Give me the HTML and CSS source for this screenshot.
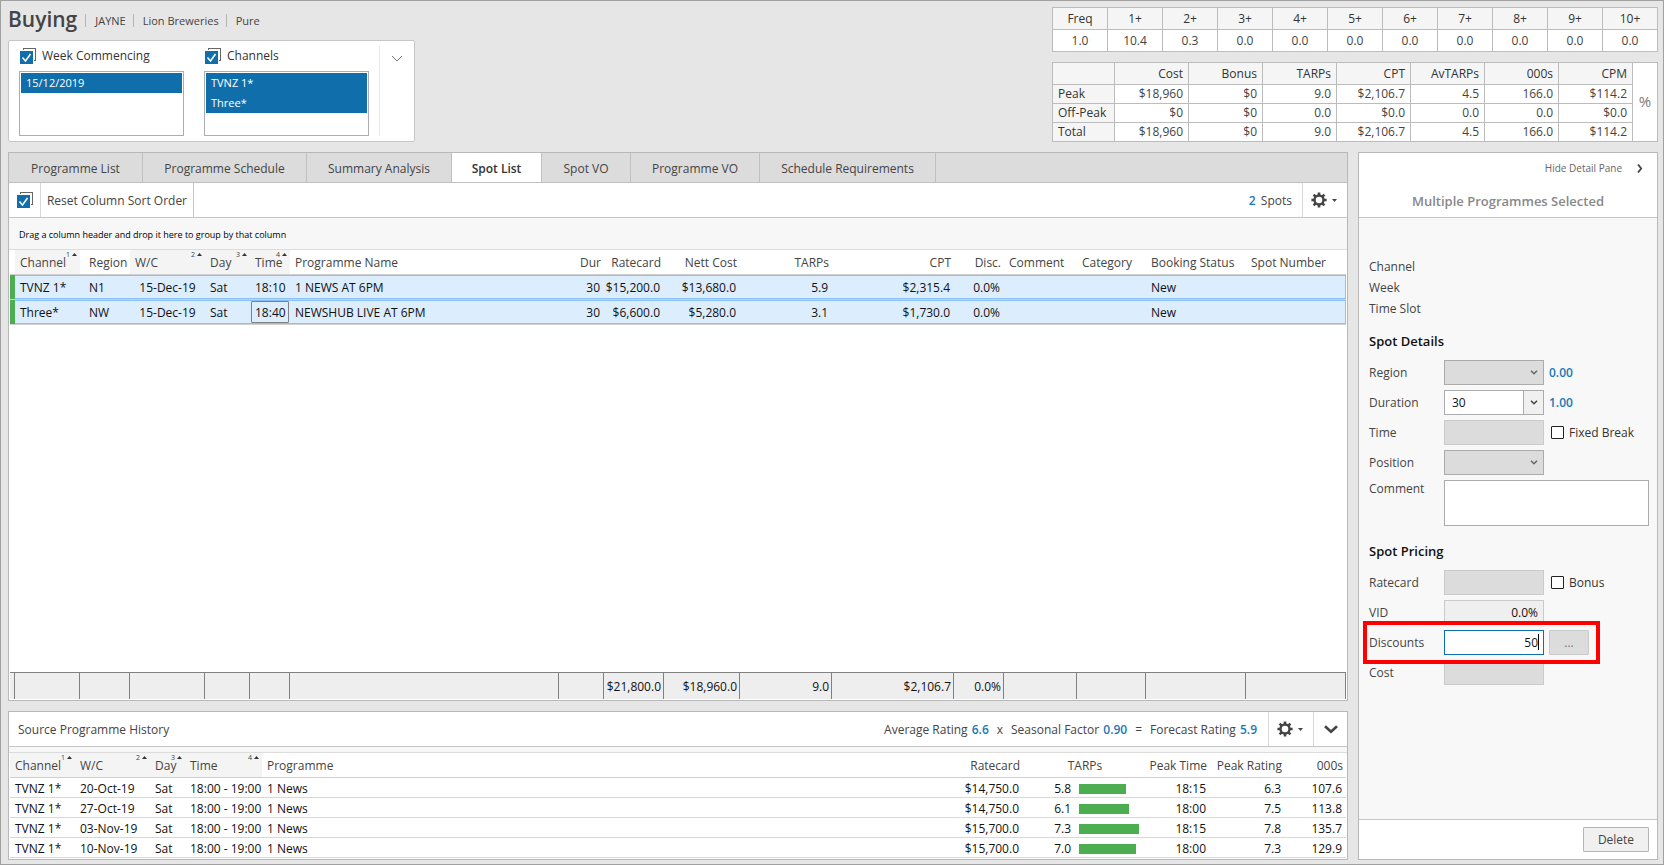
FILE: index.html
```html
<!DOCTYPE html>
<html lang="en">
<head>
    <meta charset="UTF-8">
    <meta name="viewport" content="width=device-width, initial-scale=1.0">
    <title>Buying</title>
    <link rel="stylesheet" href="styles.css">
</head>
<body>
    <svg class="defs" aria-hidden="true">
        <symbol id="check-all" viewBox="0 0 16 16">
            <rect x="3.5" y="0.5" width="12" height="12" fill="#fff" stroke="#666"/>
            <path d="M0 2h14v14H0z" fill="#fff"/>
            <rect x="0" y="3" width="13" height="13" fill="#106fab"/>
            <path d="M2.5 9.5l3 3.5 5-7" fill="none" stroke="#fff" stroke-width="1.5"/>
        </symbol>
        <symbol id="gear" viewBox="0 0 16 16">
            <circle cx="8" cy="8" r="4.5" fill="none" stroke="#444" stroke-width="2.4"/>
            <path d="M8 0.4v3M8 12.6v3M0.4 8h3M12.6 8h3M2.6 2.6l2.2 2.2M11.2 11.2l2.2 2.2M2.6 13.4l2.2-2.2M11.2 4.8l2.2-2.2" stroke="#444" stroke-width="2.6"/>
        </symbol>
        <symbol id="caret" viewBox="0 0 5 3">
            <path d="M0 0h5L2.5 3z" fill="#444"/>
        </symbol>
        <symbol id="sort-up" viewBox="0 0 5 3">
            <path d="M0 3h5L2.5 0z" fill="#333"/>
        </symbol>
        <symbol id="chevron" viewBox="0 0 8 5">
            <path d="M1 0.8l3 3 3-3" fill="none" stroke="currentColor" stroke-width="1.5"/>
        </symbol>
    </svg>

    <div class="page">
        <header class="top">
            <div class="top-left">
                <div class="title-row">
                    <h1>Buying</h1>
                    <span class="crumb">JAYNE</span>
                    <span class="crumb">Lion Breweries</span>
                    <span class="crumb">Pure</span>
                </div>
                <div class="filters">
                    <div class="filter">
                        <div class="filter-title">
                            <button class="icon-btn" aria-label="Select all weeks"><svg class="icon16"><use href="#check-all"/></svg></button>
                            <span>Week Commencing</span>
                        </div>
                        <ul class="list" role="listbox" aria-label="Week Commencing">
                            <li role="option" aria-selected="true">15/12/2019</li>
                        </ul>
                    </div>
                    <div class="filter">
                        <div class="filter-title">
                            <button class="icon-btn" aria-label="Select all channels"><svg class="icon16"><use href="#check-all"/></svg></button>
                            <span>Channels</span>
                        </div>
                        <ul class="list" role="listbox" aria-label="Channels">
                            <li role="option" aria-selected="true">TVNZ 1*</li>
                            <li role="option" aria-selected="true">Three*</li>
                        </ul>
                    </div>
                    <button class="expand" aria-label="Expand filters">
                        <svg width="12" height="7" viewBox="0 0 12 7"><path d="M1 1l5 5 5-5" fill="none" stroke="#777"/></svg>
                    </button>
                </div>
            </div>

            <div class="top-right">
                <table class="stats freq">
                    <thead>
                        <tr><th>Freq</th><th>1+</th><th>2+</th><th>3+</th><th>4+</th><th>5+</th><th>6+</th><th>7+</th><th>8+</th><th>9+</th><th>10+</th></tr>
                    </thead>
                    <tbody>
                        <tr><td>1.0</td><td>10.4</td><td>0.3</td><td>0.0</td><td>0.0</td><td>0.0</td><td>0.0</td><td>0.0</td><td>0.0</td><td>0.0</td><td>0.0</td></tr>
                    </tbody>
                </table>
                <table class="stats costs">
                    <colgroup><col class="c-label"><col span="7"><col class="c-pct"></colgroup>
                    <tbody>
                        <tr class="head"><th></th><th>Cost</th><th>Bonus</th><th>TARPs</th><th>CPT</th><th>AvTARPs</th><th>000s</th><th>CPM</th><td class="pct" rowspan="4"><button>%</button></td></tr>
                        <tr><th class="row-label">Peak</th><td>$18,960</td><td>$0</td><td>9.0</td><td>$2,106.7</td><td>4.5</td><td>166.0</td><td>$114.2</td></tr>
                        <tr><th class="row-label">Off-Peak</th><td>$0</td><td>$0</td><td>0.0</td><td>$0.0</td><td>0.0</td><td>0.0</td><td>$0.0</td></tr>
                        <tr><th class="row-label">Total</th><td>$18,960</td><td>$0</td><td>9.0</td><td>$2,106.7</td><td>4.5</td><td>166.0</td><td>$114.2</td></tr>
                    </tbody>
                </table>
            </div>
        </header>

        <div class="workspace">
            <main class="left">
                <section class="panel spots">
                    <nav class="tabs">
                        <button>Programme List</button>
                        <button>Programme Schedule</button>
                        <button>Summary Analysis</button>
                        <button class="active">Spot List</button>
                        <button>Spot VO</button>
                        <button>Programme VO</button>
                        <button>Schedule Requirements</button>
                    </nav>
                    <div class="toolbar">
                        <button class="tool check" aria-label="Select all spots"><svg class="icon16"><use href="#check-all"/></svg></button>
                        <button class="tool reset">Reset Column Sort Order</button>
                        <span class="count"><b>2</b> Spots</span>
                        <button class="tool settings" aria-label="Spot list settings"><svg class="icon16"><use href="#gear"/></svg><svg class="caret"><use href="#caret"/></svg></button>
                    </div>
                    <div class="group-hint">Drag a column header and drop it here to group by that column</div>
                    <div class="grid-wrap">
                        <table class="grid spot-grid">
                            <colgroup>
                                <col class="w5"><col class="w65"><col class="w50"><col class="w75"><col class="w45"><col class="w40"><col>
                                <col class="w45"><col class="w60"><col class="w76"><col class="w92"><col class="w122"><col class="w50"><col class="w73"><col class="w69"><col class="w100"><col class="w100">
                            </colgroup>
                            <thead>
                                <tr>
                                    <th></th>
                                    <th class="sorted">Channel<span class="sort">1<svg><use href="#sort-up"/></svg></span></th>
                                    <th class="region">Region</th>
                                    <th class="sorted">W/C<span class="sort">2<svg><use href="#sort-up"/></svg></span></th>
                                    <th class="sorted">Day<span class="sort">3<svg><use href="#sort-up"/></svg></span></th>
                                    <th class="sorted">Time<span class="sort">4<svg><use href="#sort-up"/></svg></span></th>
                                    <th>Programme Name</th>
                                    <th class="num">Dur</th>
                                    <th class="num">Ratecard</th>
                                    <th class="num">Nett Cost</th>
                                    <th class="num">TARPs</th>
                                    <th class="num">CPT</th>
                                    <th class="num">Disc.</th>
                                    <th>Comment</th>
                                    <th>Category</th>
                                    <th>Booking Status</th>
                                    <th>Spot Number</th>
                                </tr>
                            </thead>
                            <tbody>
                                <tr>
                                    <td class="flag"></td><td>TVNZ 1*</td><td class="region">N1</td><td class="date">15-Dec-19</td><td>Sat</td><td>18:10</td><td>1 NEWS AT 6PM</td>
                                    <td class="num">30</td><td class="num">$15,200.0</td><td class="num">$13,680.0</td><td class="num">5.9</td><td class="num">$2,315.4</td><td class="num">0.0%</td><td></td><td></td><td>New</td><td></td>
                                </tr>
                                <tr>
                                    <td class="flag"></td><td>Three*</td><td class="region">NW</td><td class="date">15-Dec-19</td><td>Sat</td><td class="focused">18:40</td><td>NEWSHUB LIVE AT 6PM</td>
                                    <td class="num">30</td><td class="num">$6,600.0</td><td class="num">$5,280.0</td><td class="num">3.1</td><td class="num">$1,730.0</td><td class="num">0.0%</td><td></td><td></td><td>New</td><td></td>
                                </tr>
                            </tbody>
                        </table>
                        <table class="grid totals">
                            <colgroup>
                                <col class="w5"><col class="w65"><col class="w50"><col class="w75"><col class="w45"><col class="w40"><col>
                                <col class="w45"><col class="w60"><col class="w76"><col class="w92"><col class="w122"><col class="w50"><col class="w73"><col class="w69"><col class="w100"><col class="w100">
                            </colgroup>
                            <tbody>
                                <tr>
                                    <td></td><td></td><td></td><td></td><td></td><td></td><td></td><td></td>
                                    <td>$21,800.0</td><td>$18,960.0</td><td>9.0</td><td>$2,106.7</td><td>0.0%</td>
                                    <td></td><td></td><td></td><td></td>
                                </tr>
                            </tbody>
                        </table>
                    </div>
                </section>

                <section class="panel history">
                    <div class="history-head">
                        <h2>Source Programme History</h2>
                        <div class="formula">
                            <span>Average Rating <b>6.6</b></span>
                            <span>x</span>
                            <span>Seasonal Factor <b>0.90</b></span>
                            <span>=</span>
                            <span>Forecast Rating <b>5.9</b></span>
                        </div>
                        <button class="tool settings" aria-label="History settings"><svg class="icon16"><use href="#gear"/></svg><svg class="caret"><use href="#caret"/></svg></button>
                        <button class="tool collapse" aria-label="Collapse history">
                            <svg width="14" height="9" viewBox="0 0 14 9"><path d="M1 1.2l6 5.6 6-5.6" fill="none" stroke="#444" stroke-width="2.6"/></svg>
                        </button>
                    </div>
                    <div class="strip"></div>
                    <table class="grid history-grid">
                        <colgroup>
                            <col class="w65"><col class="w75"><col class="w35"><col class="w77"><col><col class="w100"><col class="w124"><col class="w63"><col class="w75"><col class="w61">
                        </colgroup>
                        <thead>
                            <tr>
                                <th class="sorted">Channel<span class="sort">1<svg><use href="#sort-up"/></svg></span></th>
                                <th class="sorted">W/C<span class="sort">2<svg><use href="#sort-up"/></svg></span></th>
                                <th class="sorted">Day<span class="sort">3<svg><use href="#sort-up"/></svg></span></th>
                                <th class="sorted">Time<span class="sort">4<svg><use href="#sort-up"/></svg></span></th>
                                <th>Programme</th>
                                <th class="num">Ratecard</th>
                                <th class="mid">TARPs</th>
                                <th class="num">Peak Time</th>
                                <th class="num">Peak Rating</th>
                                <th class="num">000s</th>
                            </tr>
                        </thead>
                        <tbody>
                            <tr><td>TVNZ 1*</td><td>20-Oct-19</td><td>Sat</td><td>18:00 - 19:00</td><td>1 News</td><td class="num">$14,750.0</td><td class="tarp"><div><span>5.8</span><i style="width: 47px"></i></div></td><td class="num">18:15</td><td class="num">6.3</td><td class="num">107.6</td></tr>
                            <tr><td>TVNZ 1*</td><td>27-Oct-19</td><td>Sat</td><td>18:00 - 19:00</td><td>1 News</td><td class="num">$14,750.0</td><td class="tarp"><div><span>6.1</span><i style="width: 50px"></i></div></td><td class="num">18:00</td><td class="num">7.5</td><td class="num">113.8</td></tr>
                            <tr><td>TVNZ 1*</td><td>03-Nov-19</td><td>Sat</td><td>18:00 - 19:00</td><td>1 News</td><td class="num">$15,700.0</td><td class="tarp"><div><span>7.3</span><i style="width: 60px"></i></div></td><td class="num">18:15</td><td class="num">7.8</td><td class="num">135.7</td></tr>
                            <tr><td>TVNZ 1*</td><td>10-Nov-19</td><td>Sat</td><td>18:00 - 19:00</td><td>1 News</td><td class="num">$15,700.0</td><td class="tarp"><div><span>7.0</span><i style="width: 57px"></i></div></td><td class="num">18:00</td><td class="num">7.3</td><td class="num">129.9</td></tr>
                        </tbody>
                    </table>
                </section>
            </main>

            <aside class="panel detail">
                <div class="detail-head">
                    <button class="hide-pane">Hide Detail Pane
                        <svg width="6" height="9" viewBox="0 0 6 9"><path d="M1 0.5L4.2 4.5 1 8.5" fill="none" stroke="#444" stroke-width="1.8"/></svg>
                    </button>
                    <h2>Multiple Programmes Selected</h2>
                </div>
                <form class="detail-body">
                    <div class="info">
                        <div>Channel</div>
                        <div>Week</div>
                        <div>Time Slot</div>
                    </div>

                    <h3>Spot Details</h3>
                    <div class="fields">
                        <label for="region">Region</label>
                        <div class="select disabled"><select id="region" disabled></select><span class="arrow"><svg><use href="#chevron"/></svg></span></div>
                        <b>0.00</b>

                        <label for="duration">Duration</label>
                        <div class="select"><select id="duration"><option>30</option></select><span class="arrow"><svg><use href="#chevron"/></svg></span></div>
                        <b>1.00</b>

                        <label for="time">Time</label>
                        <input class="box" type="text" id="time" disabled>
                        <label class="tick"><input type="checkbox">Fixed Break</label>

                        <label for="position">Position</label>
                        <div class="select disabled"><select id="position" disabled></select><span class="arrow"><svg><use href="#chevron"/></svg></span></div>
                        <span></span>

                        <label class="label-top" for="comment">Comment</label>
                        <textarea id="comment"></textarea>
                    </div>

                    <h3>Spot Pricing</h3>
                    <div class="fields">
                        <label for="ratecard">Ratecard</label>
                        <input class="box" type="text" id="ratecard" disabled>
                        <label class="tick"><input type="checkbox">Bonus</label>

                        <label for="vid">VID</label>
                        <input class="box readonly" type="text" id="vid" value="0.0%" readonly>
                        <span></span>

                        <div class="fields discount-row">
                            <label for="discounts">Discounts</label>
                            <div class="caret-box"><input class="box active" type="text" id="discounts" value="50"></div>
                            <button type="button" class="more" aria-label="Edit discounts">...</button>
                        </div>

                        <label for="cost">Cost</label>
                        <input class="box" type="text" id="cost" disabled>
                    </div>
                </form>
                <div class="detail-foot">
                    <button class="delete">Delete</button>
                </div>
            </aside>
        </div>
    </div>
</body>
</html>
```
FILE: styles.css
```css
*, *::before, *::after {
    box-sizing: border-box;
}
body {
    margin: 0;
    font-family: "Open Sans", "Noto Sans", sans-serif;
    font-size: 12px;
    line-height: 18px;
    color: #444;
    background-color: #e6e6e6;
}
button, input, select, textarea {
    font: inherit;
    color: inherit;
    margin: 0;
}
button {
    background: none;
    border: 0;
    padding: 0;
    cursor: pointer;
}
h1, h2, h3, ul {
    margin: 0;
    padding: 0;
}
svg {
    display: block;
}
b {
    font-weight: 600;
    color: #1a78b5;
}
.defs {
    position: absolute;
    width: 0;
    height: 0;
}
.icon16 {
    width: 16px;
    height: 16px;
}
.page {
    min-height: 100vh;
    display: flex;
    flex-direction: column;
    gap: 10px;
    padding: 6px 5px 4px 7px;
    border: 1px solid #a0a0a0;
}

/* top area */
.top {
    display: flex;
    justify-content: space-between;
    align-items: flex-start;
}
.title-row {
    display: flex;
    align-items: center;
    height: 33px;
    padding-bottom: 10px;
}
h1 {
    font-size: 21px;
    line-height: 24px;
    font-weight: 600;
    margin-right: 8px;
}
.crumb {
    border-left: 1px solid #b5b5b5;
    margin-top: 4px;
    padding: 0 7px 0 9px;
    font-size: 11px;
    line-height: 13px;
}
.filters {
    display: flex;
    gap: 20px;
    height: 102px;
    padding: 5px 0 5px 10px;
    background-color: #fff;
    border: 1px solid #c6c6c6;
    border-radius: 2px;
}
.filter {
    width: 165px;
}
.filter-title {
    display: flex;
    align-items: center;
    gap: 6px;
    height: 20px;
    margin-bottom: 5px;
    padding-left: 1px;
    color: #333;
    font-weight: 500;
}
.list {
    list-style: none;
    height: 65px;
    padding: 1px;
    border: 1px solid #abadb3;
}
.list li {
    height: 20px;
    padding-left: 5px;
    font-size: 11px;
    line-height: 20px;
    color: #fff;
    background-color: #106fab;
}
.expand {
    display: flex;
    justify-content: center;
    align-items: flex-start;
    width: 35px;
    margin-left: -10px;
    padding-top: 9px;
    border-left: 1px solid #e8e8e8;
}

/* statistics tables */
.stats {
    width: 606px;
    table-layout: fixed;
    border-spacing: 0;
    border: solid #bcbcbc;
    border-width: 1px 0 0 1px;
    background-color: #fff;
}
.stats th, .stats td {
    padding: 0;
    border: solid #bcbcbc;
    border-width: 0 1px 1px 0;
}
.stats th {
    background-color: #f5f5f5;
    font-weight: 500;
    color: #333;
}
.freq {
    margin-bottom: 10px;
    text-align: center;
}
.freq tr {
    height: 22px;
}
.costs th, .costs td {
    height: 19px;
    padding-right: 5px;
    text-align: right;
}
.costs .head th {
    height: 22px;
}
.costs .row-label {
    padding: 0 0 0 5px;
    text-align: left;
}
.c-label {
    width: 62px;
}
.c-pct {
    width: 25px;
}
.costs .pct {
    padding: 0;
    text-align: center;
    color: #777;
}
.pct button {
    font-size: 15px;
}

/* workspace */
.workspace {
    flex: 1;
    display: grid;
    grid-template-columns: minmax(0, 1fr) 300px;
    gap: 10px;
}
.left {
    display: flex;
    flex-direction: column;
    gap: 10px;
}
.panel {
    background-color: #fff;
    border: 1px solid #b8b8b8;
}
.spots {
    flex: 1;
    display: flex;
    flex-direction: column;
}
.tabs {
    display: grid;
    grid-template-columns: 134px 164px 145px 90px 89px 129px 176px;
    height: 30px;
    background-color: #dcdcdc;
    border-bottom: 1px solid #c0c0c0;
}
.tabs button {
    padding-top: 2px;
    border-right: 1px solid #c0c0c0;
    font-size: 12px;
}
.tabs .active {
    background-color: #fff;
    font-weight: 600;
    color: #333;
}
.toolbar, .history-head {
    display: flex;
    align-items: center;
    height: 35px;
    border-bottom: 1px solid #c6c6c6;
}
.tool {
    display: flex;
    justify-content: center;
    align-items: center;
    height: 34px;
}
.check {
    width: 32px;
    border-right: 1px solid #d8d8d8;
}
.reset {
    width: 153px;
    padding-top: 2px;
    border-right: 1px solid #c6c6c6;
}
.count {
    margin-left: auto;
    padding: 2px 10px 0 0;
}
.count b {
    margin-right: 2px;
}
.settings {
    gap: 5px;
    width: 45px;
    padding-right: 3px;
    border-left: 1px solid #d8d8d8;
}
.caret {
    width: 5px;
    height: 3px;
}
.collapse {
    width: 34px;
    border-left: 1px solid #d8d8d8;
}
.group-hint {
    height: 32px;
    padding: 1px 0 0 10px;
    font-size: 9px;
    line-height: 31px;
    color: #000;
    background-color: #f7f7f7;
    border-bottom: 1px solid #dcdcdc;
}
.grid-wrap {
    flex: 1;
    display: flex;
    flex-direction: column;
    justify-content: space-between;
    padding: 0 1px 1px;
}

/* data grids */
.grid {
    width: 100%;
    table-layout: fixed;
    border-spacing: 0;
}
.grid th, .grid td {
    padding: 2px 0 0 5px;
    text-align: left;
    white-space: nowrap;
}
.grid th {
    position: relative;
    height: 25px;
    font-weight: 500;
    border-bottom: 1px solid #d0d0d0;
}
.grid td {
    color: #111;
}
.grid .sorted {
    background-color: #f4f4f4;
}
.sort {
    position: absolute;
    top: 1px;
    right: 3px;
    display: flex;
    align-items: center;
    gap: 2px;
    font-size: 7px;
    line-height: 7px;
}
.sort svg {
    width: 5px;
    height: 3px;
}
.grid .num {
    padding-left: 0;
    padding-right: 3px;
    text-align: right;
}
.grid td.num {
    padding-right: 4px;
}
.grid .mid, .grid .date {
    padding-left: 0;
    text-align: center;
}
.grid .region {
    padding-left: 9px;
}
.spot-grid tbody td {
    height: 25px;
    background-color: #dcedfd;
    border-bottom: 1px solid #d0d0d0;
    box-shadow: inset 0 1px #8ac0f2, inset 0 -1px #8ac0f2;
}
.spot-grid tbody td:last-child {
    box-shadow: inset 0 1px #8ac0f2, inset -1px -1px #8ac0f2;
}
.spot-grid tbody .flag {
    background-color: #4cae50;
    box-shadow: none;
}
.spot-grid .focused {
    position: relative;
}
.focused::after {
    content: "";
    position: absolute;
    inset: 1px;
    border: 1px solid #808080;
    border-radius: 1px;
}
.totals tbody td {
    height: 27px;
    padding: 2px 2px 0 0;
    text-align: right;
    background-color: #eee;
    border-top: 1px solid #808080;
    border-right: 1px solid #808080;
}
.w5 { width: 5px; }
.w35 { width: 35px; }
.w40 { width: 40px; }
.w45 { width: 45px; }
.w50 { width: 50px; }
.w60 { width: 60px; }
.w61 { width: 61px; }
.w63 { width: 63px; }
.w65 { width: 65px; }
.w69 { width: 69px; }
.w73 { width: 73px; }
.w75 { width: 75px; }
.w76 { width: 76px; }
.w77 { width: 77px; }
.w92 { width: 92px; }
.w100 { width: 100px; }
.w122 { width: 122px; }
.w124 { width: 124px; }

/* history */
.history {
    padding-bottom: 1px;
}
.history-head h2 {
    flex: 1;
    padding: 2px 0 0 9px;
    font-size: 12px;
    font-weight: 500;
}
.formula {
    display: flex;
    gap: 8px;
    padding: 2px 11px 0 0;
}
.formula b {
    margin-left: 1px;
}
.strip {
    height: 6px;
    background-color: #f7f7f7;
    border-bottom: 1px solid #dcdcdc;
}
.history-grid {
    padding: 0 1px;
}
.history-grid td {
    height: 20px;
    line-height: 17px;
    border-bottom: 1px solid #d8d8d8;
}
.tarp div {
    display: flex;
    align-items: center;
    gap: 8px;
}
.tarp span {
    width: 43px;
    text-align: right;
}
.tarp i {
    height: 10px;
    background-color: #4cae50;
}

/* detail pane */
.detail {
    display: flex;
    flex-direction: column;
    background-color: #f8f8f8;
}
.detail-head {
    display: flex;
    flex-direction: column;
    justify-content: space-between;
    height: 65px;
    padding: 6px 14px 7px 0;
    background-color: #fff;
    border-bottom: 1px solid #c6c6c6;
}
.hide-pane {
    display: flex;
    align-items: center;
    align-self: flex-end;
    gap: 15px;
    font-size: 10px;
    font-weight: 500;
    color: #666;
}
.detail-head h2 {
    padding-left: 14px;
    text-align: center;
    font-size: 13px;
    font-weight: 600;
    color: #888;
}
.detail-body {
    flex: 1;
    padding: 38px 8px 0 10px;
}
.info {
    line-height: 21px;
}
h3 {
    margin: 12px 0 9px;
    font-size: 13px;
    line-height: 20px;
    font-weight: 600;
    color: #111;
}
.fields + h3 {
    margin-top: 15px;
}
.fields {
    display: grid;
    grid-template-columns: 75px 100px 1fr;
    row-gap: 5px;
    align-items: center;
}
.fields b {
    padding-left: 5px;
}
.box {
    display: block;
    width: 100px;
    height: 25px;
    padding: 0 5px;
    text-align: right;
    color: #111;
    background-color: #fff;
    border: 1px solid #ababab;
}
.box:disabled {
    background-color: #dcdcdc;
    border-color: #cacaca;
}
.box.readonly {
    background-color: #efefef;
    border-color: #cacaca;
}
.box.active {
    border-color: #106fab;
}
.select {
    position: relative;
    height: 25px;
    background-color: #fff;
    border: 1px solid #ababab;
}
.select select {
    display: block;
    width: 100%;
    height: 23px;
    padding: 0 7px;
    appearance: none;
    background: none;
    border: 0;
    color: #111;
}
.arrow {
    position: absolute;
    top: 0;
    right: 0;
    display: flex;
    justify-content: center;
    align-items: center;
    width: 20px;
    height: 23px;
    background-color: #f0f0f0;
    border-left: 1px solid #ababab;
    pointer-events: none;
}
.arrow svg {
    width: 8px;
    height: 5px;
}
.select.disabled, .disabled .arrow {
    background-color: #dcdcdc;
}
.disabled .arrow {
    border-color: transparent;
    color: #666;
}
.tick {
    display: flex;
    align-items: center;
    gap: 5px;
    padding-left: 7px;
    color: #333;
}
.tick input {
    width: 13px;
    height: 13px;
    appearance: none;
    background-color: #fff;
    border: 1px solid #222;
    border-radius: 1px;
}
.label-top {
    align-self: start;
}
textarea {
    grid-column: 2 / 4;
    display: block;
    width: 100%;
    height: 46px;
    resize: none;
    background-color: #fff;
    border: 1px solid #ababab;
}
.discount-row {
    grid-column: 1 / 4;
    position: relative;
}
/* highlight drawn over the neighbouring rows */
.discount-row::after {
    content: "";
    position: absolute;
    top: -9px;
    left: -6px;
    width: 237px;
    height: 43px;
    border: 4px solid #fe0000;
    pointer-events: none;
}
.caret-box {
    position: relative;
}
.caret-box::after {
    content: "";
    position: absolute;
    top: 4px;
    right: 5px;
    width: 1px;
    height: 16px;
    background-color: #000;
}
.more {
    width: 40px;
    height: 25px;
    margin-left: 5px;
    background-color: #dcdcdc;
    border: 1px solid #cacaca;
    border-radius: 1px;
    color: #777;
}
.detail-foot {
    display: flex;
    justify-content: flex-end;
    height: 40px;
    padding: 7px 8px;
    background-color: #fff;
    border-top: 1px solid #c6c6c6;
}
.delete {
    width: 66px;
    height: 25px;
    background-color: #f0f0f0;
    border: 1px solid #b5b5b5;
    border-radius: 1px;
}
```
